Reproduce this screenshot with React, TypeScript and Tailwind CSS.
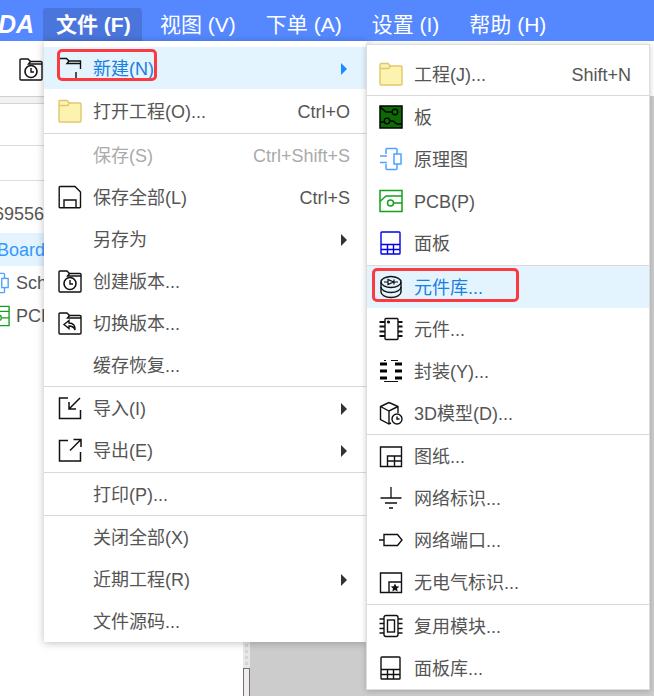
import type { ReactNode } from 'react';

const sans = 'font-["Liberation_Sans","Noto_Sans_CJK_SC",sans-serif]';

type MenuItem = {
  label?: string;
  icon?: ReactNode;
  shortcut?: string;
  arrow?: boolean;
  active?: boolean;
  disabled?: boolean;
  divider?: boolean;
  gap?: boolean; // 1px of extra space above the row
};

// Shared svg wrapper, all menu icons are drawn on a 24 box
function Ic({ children }: { children: ReactNode }) {
  return (
    <svg width="24" height="24" viewBox="0 0 24 24" fill="none" stroke="#111" strokeWidth="1.4" className="block">
      {children}
    </svg>
  );
}

function YellowFolder() {
  return (
    <Ic>
      <path d="M1 2.500a1 1 0 0 1 1-1h7l2.500 2.500H22a1 1 0 0 1 1 1V22a1 1 0 0 1-1 1H2a1 1 0 0 1-1-1z" fill="#fdf3b0" stroke="#dfc76c" />
      <path d="M11.500 4L9.500 6.500H1" stroke="#dfc76c" />
    </Ic>
  );
}

function FolderOutline({ children }: { children?: ReactNode }) {
  return (
    <Ic>
      <path d="M1 3a1 1 0 0 1 1-1h7l2.500 2.500H22a1 1 0 0 1 1 1V22a1 1 0 0 1-1 1H2a1 1 0 0 1-1-1z" />
      <path d="M11.500 4.500L9.500 7H23" />
      {children}
    </Ic>
  );
}

function NewFolderIcon() {
  return (
    <Ic>
      <path d="M6 23H2a1 1 0 0 1-1-1V2.500h7.500l2.500 2.500h11.500V13" />
      <path d="M11 5L9 7.500H23" />
      <path d="M18 16v7M14 23h8" />
    </Ic>
  );
}

function ClockFolder() {
  return (
    <FolderOutline>
      <circle cx="12" cy="14.500" r="6" strokeWidth="1.600" />
      <path d="M12 11v4h3" />
    </FolderOutline>
  );
}

function ReplyFolder() {
  return (
    <FolderOutline>
      <path d="M11 9.500L6 13.500l5 4v-2.500c3 0 5 1 6 4 .4-4-1.500-7-6-7z" />
    </FolderOutline>
  );
}

function SaveIcon() {
  return (
    <Ic>
      <path d="M2 1.500h15l5.500 5.500v15a.8.8 0 0 1-.8.8H2a.8.8 0 0 1-.8-.8V2.300a.8.8 0 0 1 .8-.8z" />
      <path d="M6 23v-8h12v8" />
    </Ic>
  );
}

function ImportIcon() {
  return (
    <Ic>
      <path d="M10 2H1.500v20.500H22.500V14" strokeWidth="1.500" />
      <path d="M22 2L11.500 12.500M11 6v7h7" strokeWidth="1.500" />
    </Ic>
  );
}

function ExportIcon() {
  return (
    <Ic>
      <path d="M10 2.500H1.500V23H22.500V14" strokeWidth="1.500" />
      <path d="M12 12.500L22.500 2M15.500 1.500h7.500v7.500" strokeWidth="1.500" />
    </Ic>
  );
}

function BoardIcon() {
  return (
    <Ic>
      <rect x="1" y="1" width="22" height="22" fill="#0a6b00" stroke="#000" strokeWidth="1.500" />
      <path d="M1 2l6 5h7M1 17h4M11 16h3l4 3h5" stroke="#000" />
      <circle cx="16" cy="7" r="2.800" stroke="#000" strokeWidth="1.300" />
      <circle cx="8" cy="16" r="2.800" stroke="#000" strokeWidth="1.300" />
    </Ic>
  );
}

function SchIcon({ size = 24 }: { size?: number }) {
  return (
    <svg width={size} height={size} viewBox="0 0 24 24" fill="none" stroke="#4da3ff" strokeWidth="1.500" className="block">
      <path d="M7 7V2.500a1 1 0 0 1 1-1h9a1 1 0 0 1 1 1V7M18 17v4.500a1 1 0 0 1-1 1H8a1 1 0 0 1-1-1V17" />
      <rect x="15" y="7" width="7" height="10" />
      <path d="M1 9h7M1 15.500h7" />
    </svg>
  );
}

function PcbIcon({ size = 24 }: { size?: number }) {
  return (
    <svg width={size} height={size} viewBox="0 0 24 24" fill="none" stroke="#14a01e" strokeWidth="1.500" className="block">
      <path d="M1 1.500h22v21H1zM1 12.500L7 7h16M15 14h8" />
      <circle cx="11.500" cy="14" r="3" />
    </svg>
  );
}

function PanelIcon({ color = '#0000ee' }: { color?: string }) {
  return (
    <svg width="24" height="24" viewBox="0 0 24 24" fill="none" stroke={color} strokeWidth="1.400" className="block">
      <rect x="2" y="1" width="19" height="22" rx="0.800" />
      <path d="M2 13.500h19M2 18.500h19M8.500 13.500V23M14.500 13.500V23" />
    </svg>
  );
}

function LibIcon() {
  return (
    <Ic>
      <ellipse cx="12" cy="7" rx="10" ry="5.500" />
      <path d="M2 7v5c0 3 4.500 5.500 10 5.500s10-2.500 10-5.500V7" />
      <path d="M2 12v5c0 3 4.500 5.500 10 5.500s10-2.500 10-5.500v-5" />
      <path d="M5 7h4M15 7h4M9 4.500v5l5.500-2.500zM15 4.500v5" strokeWidth="1.200" />
    </Ic>
  );
}

function ChipIcon() {
  return (
    <Ic>
      <rect x="6" y="1.500" width="13" height="21" rx="1" />
      <circle cx="9.500" cy="5" r="0.900" fill="#111" />
      <path d="M0.500 5H6M0.500 9.500H6M0.500 14.500H6M0.500 19H6M19 5h4.500M19 9.500h4.500M19 14.500h4.500M19 19h4.500" strokeWidth="1.800" />
    </Ic>
  );
}

function FootprintIcon() {
  return (
    <Ic>
      <path d="M5 1.500h2M12 1.500h7M5 22.500h14" strokeWidth="1" />
      <path d="M1 5h7M16 5h7M1 12h7M16 12h7M1 19h7M16 19h7" strokeWidth="3" stroke="#000" />
    </Ic>
  );
}

function ModelIcon() {
  return (
    <Ic>
      <path d="M10 1.500L19 5.500v6.500M10 1.500L1.500 5.500v13L10 23l2-1M1.500 5.500L10 10l9-4.500M10 10v13" />
      <circle cx="18" cy="18" r="5" />
      <path d="M18 15.500V18h2.500" />
    </Ic>
  );
}

function SheetIcon() {
  return (
    <Ic>
      <path d="M1.500 3h21v19.500h-21z" />
      <path d="M8.500 22.500V12h14M8.500 17h14M15.500 12v10.500" />
    </Ic>
  );
}

function GroundIcon() {
  return (
    <Ic>
      <path d="M12 1v11M1.500 12h21M6 17h12M10 22h4" strokeWidth="1.300" />
    </Ic>
  );
}

function PortIcon() {
  return (
    <Ic>
      <path d="M0 12h5M5 6.500h13.500L23 12l-4.500 5.500H5z" />
    </Ic>
  );
}

function NoErcIcon() {
  return (
    <Ic>
      <path d="M1.500 3h21v19.500h-21z" />
      <path d="M10 22.500V12h12.500" />
      <path d="M16 13.500l1.300 2.800 3 .3-2.300 2 .7 3-2.700-1.500-2.700 1.500.7-3-2.300-2 3-.3z" fill="#111" stroke="none" />
    </Ic>
  );
}

function ModuleIcon() {
  return (
    <Ic>
      <rect x="5" y="1.500" width="14" height="21" rx="2" />
      <rect x="8.500" y="6" width="7" height="12" />
      <path d="M0.500 5H5M0.500 9.500H5M0.500 14.500H5M0.500 19H5M19 5h4.500M19 9.500h4.500M19 14.500h4.500M19 19h4.500" />
    </Ic>
  );
}

const fileMenu: MenuItem[] = [
  { label: '新建(N)', icon: <NewFolderIcon />, arrow: true, active: true },
  { label: '打开工程(O)...', icon: <YellowFolder />, shortcut: 'Ctrl+O', gap: true },
  { divider: true, gap: true },
  { label: '保存(S)', shortcut: 'Ctrl+Shift+S', disabled: true },
  { label: '保存全部(L)', icon: <SaveIcon />, shortcut: 'Ctrl+S' },
  { label: '另存为', arrow: true },
  { label: '创建版本...', icon: <ClockFolder /> },
  { label: '切换版本...', icon: <ReplyFolder /> },
  { label: '缓存恢复...' },
  { divider: true },
  { label: '导入(I)', icon: <ImportIcon />, arrow: true },
  { label: '导出(E)', icon: <ExportIcon />, arrow: true },
  { divider: true, gap: true },
  { label: '打印(P)...' },
  { divider: true },
  { label: '关闭全部(X)' },
  { label: '近期工程(R)', arrow: true },
  { label: '文件源码...' },
];

const newMenu: MenuItem[] = [
  { label: '工程(J)...', icon: <YellowFolder />, shortcut: 'Shift+N' },
  { divider: true },
  { label: '板', icon: <BoardIcon /> },
  { label: '原理图', icon: <SchIcon /> },
  { label: 'PCB(P)', icon: <PcbIcon /> },
  { label: '面板', icon: <PanelIcon /> },
  { divider: true, gap: true },
  { label: '元件库...', icon: <LibIcon />, active: true },
  { label: '元件...', icon: <ChipIcon /> },
  { label: '封装(Y)...', icon: <FootprintIcon /> },
  { label: '3D模型(D)...', icon: <ModelIcon /> },
  { divider: true },
  { label: '图纸...', icon: <SheetIcon /> },
  { label: '网络标识...', icon: <GroundIcon /> },
  { label: '网络端口...', icon: <PortIcon /> },
  { label: '无电气标识...', icon: <NoErcIcon /> },
  { divider: true, gap: true },
  { label: '复用模块...', icon: <ModuleIcon /> },
  { label: '面板库...', icon: <PanelIcon color="#111" /> },
];

function MenuRow({ item, sub }: { item: MenuItem; sub?: boolean }) {
  if (item.divider) return <div className={`h-px bg-[#d9d9d9] ${item.gap ? 'mt-px' : ''}`} />;
  const color = item.active ? 'text-[#1a7fe0]' : item.disabled ? 'text-[#aaaaaa]' : 'text-[#555555]';
  return (
    <div
      className={`flex h-[42px] items-center text-lg ${sub ? 'pl-3 pr-[18px]' : 'pl-[14px] pr-[17px]'} ${color} ${
        item.active ? 'bg-[#e3f4ff]' : ''
      } ${item.gap ? 'mt-px' : ''}`}
    >
      <span className="w-6 shrink-0">{item.icon}</span>
      <span className="ml-[11px] flex-1 whitespace-nowrap pt-[2px]">{item.label}</span>
      {item.shortcut && <span className="pt-[2px]">{item.shortcut}</span>}
      {item.arrow && (
        <span
          className={`mr-[3px] mt-[2px] h-0 w-0 border-y-[6px] border-l-[6px] border-y-transparent ${
            item.active ? 'border-l-[#1a8cff]' : 'border-l-[#333333]'
          }`}
        />
      )}
    </div>
  );
}

const navItems = ['视图 (V)', '下单 (A)', '设置 (I)', '帮助 (H)'];

export default function App() {
  return (
    <div className={`relative flex h-[696px] w-[654px] flex-col overflow-hidden bg-[#cccccc] ${sans}`}>
      {/* top bar */}
      <div className="flex h-[41px] shrink-0 items-end bg-[#5588ff] text-white">
        <span className="-ml-[2px] mb-1 w-[45px] shrink-0 text-[25px] font-bold italic leading-none">DA</span>
        <div className="mr-[3px] flex h-[33px] w-[99px] items-center rounded-t-[3px] bg-[#4a75dc] pl-[13px] text-[21px] font-bold">
          文件 (F)
        </div>
        {navItems.map((n) => (
          <div key={n} className="ml-[15px] mr-[15px] flex h-[33px] items-center whitespace-nowrap text-[21px]">
            {n}
          </div>
        ))}
      </div>

      {/* toolbar */}
      <div className="flex h-[56px] shrink-0 items-center border-b border-[#cfcfcf] bg-white pl-[19px]">
        <ClockFolder />
      </div>

      {/* sidebar + canvas */}
      <div className="flex flex-1">
        <div className="w-[243px] bg-white text-lg text-[#555555]">
          <div className="h-[7px] border-b border-[#d4d4d4] bg-[#f2f2f2]" />
          <div className="h-[42px] border-b border-[#dddddd]" />
          <div className="h-[35px] border-b border-[#dddddd]" />
          <div className="flex h-[52px] items-end whitespace-nowrap pb-[5px]">
            <span className="-ml-[6px]">69556</span>
          </div>
          <div className="flex h-[33px] items-center whitespace-nowrap bg-[#e3f4ff] text-[#3399ff]">
            <span className="-ml-[3px]">Board1</span>
          </div>
          <div className="flex h-[33px] items-center gap-[6px] whitespace-nowrap">
            <span className="-ml-[12px]">
              <SchIcon size={22} />
            </span>
            Sch
          </div>
          <div className="flex h-[33px] items-center gap-[6px] whitespace-nowrap">
            <span className="-ml-[12px]">
              <PcbIcon size={22} />
            </span>
            PCB
          </div>
        </div>
        <div className="flex w-[7px] flex-col items-center justify-end bg-[#e8e8e8]">
          <div className="flex flex-col gap-[3px] pb-[3px]">
            <span className="h-[3px] w-[3px] bg-[#d4d4d4]" />
            <span className="h-[3px] w-[3px] bg-[#d4d4d4]" />
            <span className="h-[3px] w-[3px] bg-[#d4d4d4]" />
            <span className="h-[3px] w-[3px] bg-[#d4d4d4]" />
          </div>
          <div className="h-[28px] w-[7px] shrink-0 border border-b-0 border-[#7d6e72] bg-[#eeeeee]" />
        </div>
      </div>

      {/* file menu */}
      <div className="absolute left-[44px] top-[41px] w-[323px] bg-white pt-[6px] shadow-[0_1px_8px_rgba(0,0,0,0.25)]">
        {fileMenu.map((item, i) => (
          <MenuRow key={i} item={item} />
        ))}
      </div>

      {/* new submenu */}
      <div className="absolute left-[366px] top-[44px] w-[284px] border border-[#dddddd] bg-white pt-2 shadow-[0_1px_6px_rgba(0,0,0,0.2)]">
        {newMenu.map((item, i) => (
          <MenuRow key={i} item={item} sub />
        ))}
      </div>

      {/* red annotation boxes */}
      <div className="absolute left-[57px] top-[49px] h-[32px] w-[100px] rounded-[5px] border-[3px] border-[#fb3a3f]" />
      <div className="absolute left-[372px] top-[268px] h-[34px] w-[147px] rounded-[5px] border-[3px] border-[#fb3a3f]" />
    </div>
  );
}
